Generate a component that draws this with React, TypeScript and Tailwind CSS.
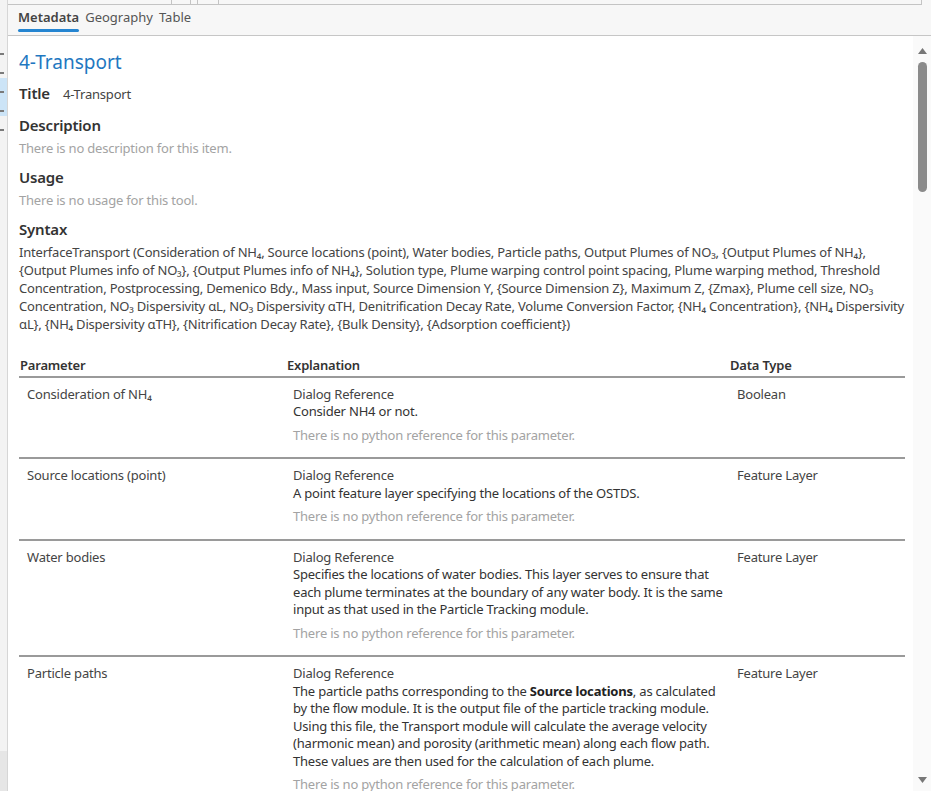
import React from "react";

// Metadata pane for the 4-Transport tool

const FONT = { fontFamily: '"Noto Sans", "Open Sans", sans-serif' };

const SYNTAX = [
  "InterfaceTransport (Consideration of NH₄, Source locations (point), Water bodies, Particle paths, Output Plumes of NO₃, {Output Plumes of NH₄},",
  "{Output Plumes info of NO₃}, {Output Plumes info of NH₄}, Solution type, Plume warping control point spacing, Plume warping method, Threshold",
  "Concentration, Postprocessing, Demenico Bdy., Mass input, Source Dimension Y, {Source Dimension Z}, Maximum Z, {Zmax}, Plume cell size, NO₃",
  "Concentration, NO₃ Dispersivity αL, NO₃ Dispersivity αTH, Denitrification Decay Rate, Volume Conversion Factor, {NH₄ Concentration}, {NH₄ Dispersivity",
  "αL}, {NH₄ Dispersivity αTH}, {Nitrification Decay Rate}, {Bulk Density}, {Adsorption coefficient})",
];

type Row = { name: string; lines: React.ReactNode[]; type: string };

const ROWS: Row[] = [
  { name: "Consideration of NH₄", lines: ["Consider NH4 or not."], type: "Boolean" },
  {
    name: "Source locations (point)",
    lines: ["A point feature layer specifying the locations of the OSTDS."],
    type: "Feature Layer",
  },
  {
    name: "Water bodies",
    lines: [
      "Specifies the locations of water bodies. This layer serves to ensure that",
      "each plume terminates at the boundary of any water body. It is the same",
      "input as that used in the Particle Tracking module.",
    ],
    type: "Feature Layer",
  },
  {
    name: "Particle paths",
    lines: [
      <>
        The particle paths corresponding to the <b className="font-bold text-[#222]">Source locations</b>, as calculated
      </>,
      "by the flow module. It is the output file of the particle tracking module.",
      "Using this file, the Transport module will calculate the average velocity",
      "(harmonic mean) and porosity (arithmetic mean) along each flow path.",
      "These values are then used for the calculation of each plume.",
    ],
    type: "Feature Layer",
  },
];

function Section({ title, children }: { title: string; children: React.ReactNode }) {
  return (
    <div className="mt-[10px]">
      <div className="text-[15px] font-semibold text-[#333] leading-[21px]">{title}</div>
      <div className="mt-[3px]">{children}</div>
    </div>
  );
}

export default function App() {
  return (
    <div className="h-[791px] w-[931px] overflow-hidden bg-white flex text-[13px]" style={FONT}>
      {/* cropped tree on the left */}
      <div className="w-[8px] shrink-0 bg-[#f3f3f3] border-r border-[#d6d6d6] flex flex-col pt-[40px] overflow-hidden">
        {[false, false, true, true, false].map((sel, i) => (
          <div key={i} className={"h-[19px] flex items-end pb-[4px] " + (sel ? "bg-[#cce4f7]" : "")}>
            <div className="h-[2px] w-[4px] bg-[#7a7a7a]" />
          </div>
        ))}
        <div className="flex-1" />
        <div className="h-[40px] bg-[#e6e6e6]" />
      </div>

      <div className="flex-1 flex flex-col min-w-0">
        {/* top toolbar remnant */}
        <div className="h-[5px] bg-[#f7f7f7] flex">
          <div className="w-[163px] border-b border-[#c4c4c4]" />
          <div className="w-[20px] border-x border-b border-[#c4c4c4]" />
          <div className="w-[6px] border-b border-[#c4c4c4]" />
          <div className="w-[22px] border-x border-b border-[#c4c4c4]" />
          <div className="flex-1 border-r border-b border-[#c4c4c4] mr-[9px]" />
        </div>
        {/* tabs */}
        <div className="h-[31px] bg-[#f7f7f7] border-b border-[#c6c6c6] flex items-start gap-[6px] pl-[10px] pt-[3px]">
          <div className="flex flex-col items-stretch">
            <span className="text-[13px] leading-[18px] font-semibold text-[#444]">Metadata</span>
            <span className="mt-[3px] h-[3px] rounded-sm bg-[#2585d1]" />
          </div>
          <span className="text-[13px] leading-[18px] text-[#555]">Geography</span>
          <span className="text-[13px] leading-[18px] text-[#555]">Table</span>
        </div>

        <div className="flex-1 flex min-h-0">
          {/* content */}
          <div className="flex-1 min-w-0 pl-[11px] pr-[7px] pt-[13px] text-[#444] tracking-[-0.2px]">
            <div className="text-[19px] leading-[26px] text-[#1f78c1] tracking-normal">4-Transport</div>
            <div className="mt-[7px] flex items-baseline gap-[13px]">
              <span className="text-[15px] font-semibold text-[#333]">Title</span>
              <span className="text-[13px] text-[#444]">4-Transport</span>
            </div>
            <Section title="Description">
              <div className="text-[#a3a3a3] leading-[18px]">There is no description for this item.</div>
            </Section>
            <Section title="Usage">
              <div className="text-[#a3a3a3] leading-[18px]">There is no usage for this tool.</div>
            </Section>
            <Section title="Syntax">
              <div className="leading-[18px] text-[#444]">
                {SYNTAX.map((l, i) => (
                  <div key={i} className="whitespace-nowrap">{l}</div>
                ))}
              </div>
            </Section>

            {/* parameter table */}
            <div className="mt-[23px] w-[886px]">
              <div className="grid grid-cols-[267px_443px_1fr] border-b-2 border-[#9a9a9a] pb-[2px] pl-[1px] font-semibold text-[#333] leading-[18px]">
                <span>Parameter</span>
                <span>Explanation</span>
                <span>Data Type</span>
              </div>
              {ROWS.map((r) => (
                <div
                  key={r.name}
                  className="grid grid-cols-[267px_443px_1fr] border-b-2 border-[#9a9a9a] pt-[8px] pb-[13px] leading-[17.5px]"
                >
                  <span className="pl-[8px]">{r.name}</span>
                  <div className="pl-[7px]">
                    <div>Dialog Reference</div>
                    {r.lines.map((l, i) => (
                      <div key={i} className="whitespace-nowrap text-[#333]">{l}</div>
                    ))}
                    <div className="mt-[6px] text-[#a3a3a3]">There is no python reference for this parameter.</div>
                  </div>
                  <span className="pl-[8px]">{r.type}</span>
                </div>
              ))}
            </div>
          </div>

          {/* scrollbar */}
          <div className="w-[18px] shrink-0 bg-[#fafafa] flex flex-col items-center pt-[12px] pb-[8px]">
            <svg width="9" height="6" viewBox="0 0 9 6">
              <path d="M4.5 0 L9 6 L0 6 Z" fill="#777" />
            </svg>
            <div className="mt-[8px] h-[130px] w-[9px] rounded-full bg-[#8b8b8b]" />
            <div className="flex-1" />
            <svg width="9" height="6" viewBox="0 0 9 6">
              <path d="M0 0 L9 0 L4.5 6 Z" fill="#777" />
            </svg>
          </div>
        </div>
      </div>
    </div>
  );
}
